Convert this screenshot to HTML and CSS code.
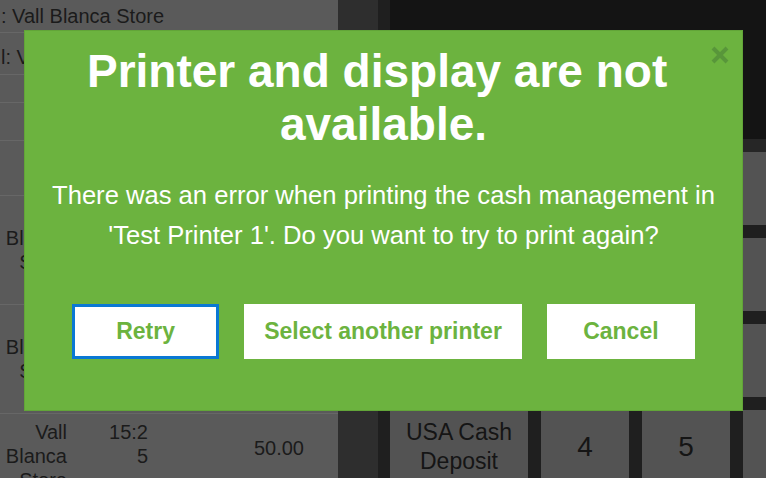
FILE: index.html
```html
<!DOCTYPE html>
<html lang="en">
<head>
  <meta charset="UTF-8">
  <meta name="viewport" content="width=device-width, initial-scale=1.0">
  <title>Cash Management</title>
  <link rel="stylesheet" href="styles.css">
</head>
<body>
  <div class="pos">
    <section class="cashup">
      <div class="info">: Vall Blanca Store</div>
      <div class="info terminal">l: Vall Blanca Store</div>
      <div class="line h28"></div>
      <div class="line h38"></div>
      <div class="line h55"></div>
      <div class="entry">
        <span class="name">Vall Blanca Store</span>
        <span class="time">15:25</span>
        <span class="amount">50.00</span>
      </div>
      <div class="entry">
        <span class="name">Vall Blanca Store</span>
        <span class="time">15:25</span>
        <span class="amount">50.00</span>
      </div>
      <div class="entry">
        <span class="name">Vall Blanca Store</span>
        <span class="time">15:25</span>
        <span class="amount">50.00</span>
      </div>
    </section>

    <div class="scroll"></div>

    <section class="register">
      <div class="display"></div>
      <div class="keypad">
        <div class="key"></div>
        <div class="key"></div>
        <div class="key"></div>
        <div class="key"></div>
        <div class="key"></div>
        <div class="key"></div>
        <div class="key"></div>
        <div class="key"></div>
        <div class="key"></div>
        <div class="key"></div>
        <div class="key"></div>
        <div class="key"></div>
        <div class="key">USA Cash Deposit</div>
        <div class="key digit">4</div>
        <div class="key digit">5</div>
        <div class="key"></div>
      </div>
    </section>
  </div>

  <div class="modal">
    <button class="close" title="Close">
      <svg width="18" height="18" viewBox="0 0 18 18">
        <path d="M2 2 L16 16 M16 2 L2 16" stroke="#58963a" stroke-width="4" fill="none"/>
      </svg>
    </button>
    <h1>Printer and display are not available.</h1>
    <p>There was an error when printing the cash management in 'Test Printer 1'. Do you want to try to print again?</p>
    <div class="actions">
      <button class="focused">Retry</button>
      <button>Select another printer</button>
      <button>Cancel</button>
    </div>
  </div>
</body>
</html>
```

FILE: styles.css
```css
body {
  margin: 0;
  width: 766px;
  height: 478px;
  overflow: hidden;
  font-family: "Liberation Sans", Arial, sans-serif;
  background-color: #1f1f1f;
}

.pos {
  display: flex;
  height: 478px;
  overflow: hidden;
}

/* cash up list on the left */
.cashup {
  flex: none;
  width: 338px;
  background-color: #5a5a5a;
  color: #1b1b1b;
  font-size: 20px;
}

.info,
.line,
.entry {
  box-sizing: border-box;
  border-bottom: 1px solid #676767;
}

.info {
  height: 33px;
  line-height: 32px;
  padding-left: 1px;
  white-space: nowrap;
  overflow: hidden;
}

.info.terminal {
  height: 42px;
  line-height: 36px;
  padding-top: 6px;
}

.h28 { height: 28px; }
.h38 { height: 38px; }
.h55 { height: 55px; }

.entry {
  display: flex;
  align-items: flex-start;
  height: 109px;
  padding-top: 6px;
  line-height: 24px;
}

.entry .name {
  width: 67px;
  text-align: right;
}

.entry .time {
  width: 42px;
  margin-left: 39px;
  text-align: right;
  word-break: break-all;
}

.entry .amount {
  width: 156px;
  margin-top: 16px;
  text-align: right;
}

.scroll {
  flex: none;
  width: 40px;
  background-color: #2e2e2e;
}

/* keypad on the right */
.register {
  flex: 1;
  padding-left: 12px;
  overflow: hidden;
}

.display {
  height: 139px;
  background-color: #141414;
  border-bottom: 13px solid #262626;
}

.keypad {
  display: grid;
  grid-template-columns: 138px 88px 88px 88px;
  grid-auto-rows: 73px;
  gap: 13px;
}

.key {
  display: flex;
  align-items: center;
  justify-content: center;
  text-align: center;
  background-color: #535353;
  color: #151515;
  font-size: 23px;
  line-height: 29px;
}

.key.digit {
  font-size: 28px;
}

/* error dialog */
.modal {
  position: fixed;
  left: 24px;
  top: 30px;
  width: 719px;
  box-sizing: border-box;
  padding: 14px 20px 51px;
  background-color: #6cb33f;
  border: 1px solid #62a538;
  color: #fff;
  text-align: center;
}

.modal h1 {
  margin: 0;
  font-size: 46px;
  line-height: 53px;
  font-weight: bold;
  white-space: break-spaces;
}

.modal p {
  margin: 24px 0 0;
  font-size: 25.6px;
  line-height: 40px;
}

.close {
  position: absolute;
  top: 15px;
  right: 13px;
  width: 18px;
  height: 18px;
  padding: 0;
  border: none;
  background: none;
}

.close svg {
  display: block;
}

.actions {
  display: flex;
  justify-content: center;
  gap: 25px;
  margin-top: 49px;
}

.actions button {
  box-sizing: border-box;
  height: 55px;
  min-width: 148px;
  padding: 0 20px;
  border: none;
  background-color: #fff;
  color: #6cb33f;
  font-family: "Liberation Sans", Arial, sans-serif;
  font-size: 23px;
  font-weight: bold;
}

.actions button.focused {
  min-width: 147px;
  border: 3px solid #0a78d4;
}
```
